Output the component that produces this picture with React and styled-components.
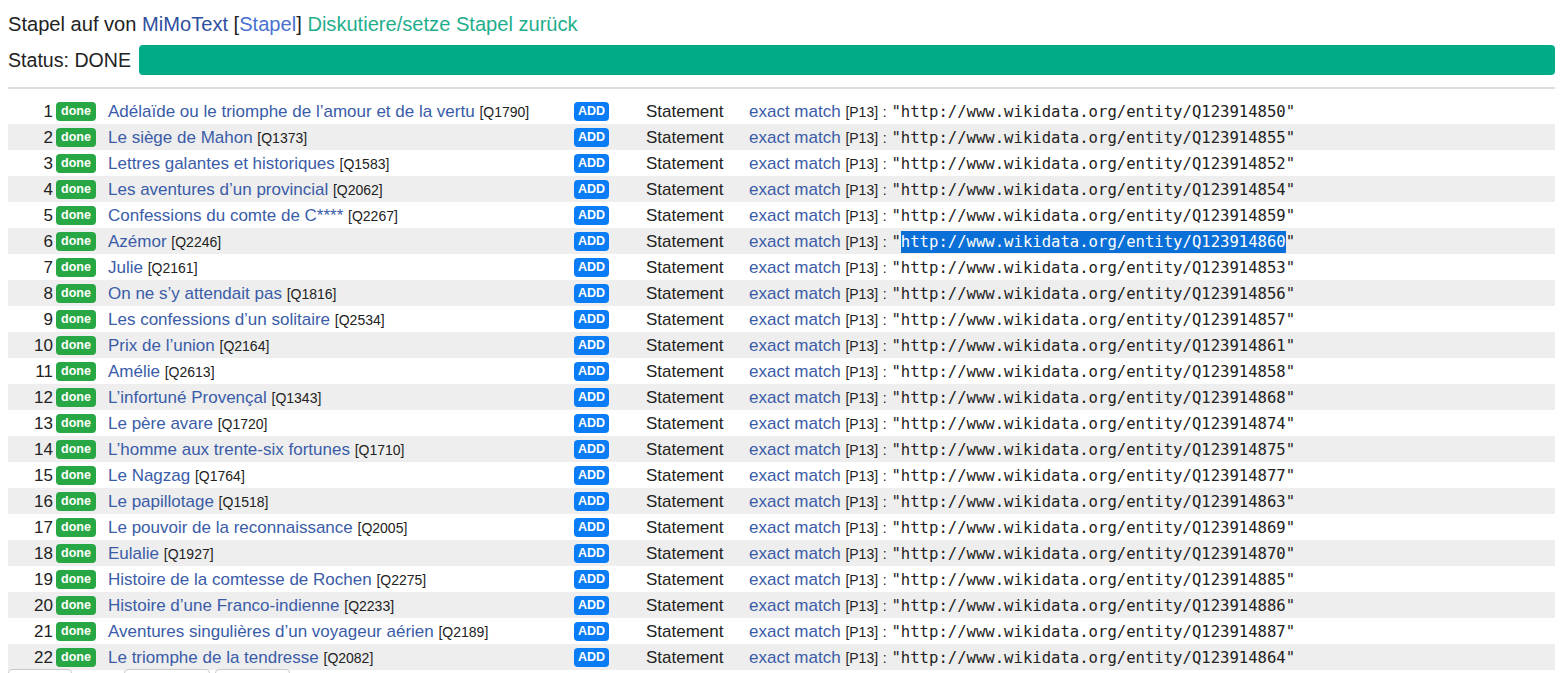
import React from 'react';
import styled, { createGlobalStyle } from 'styled-components';

const GlobalStyle = createGlobalStyle`
  body {
    margin: 0;
    background: #fff;
    font-family: "Liberation Sans", Arial, sans-serif;
    color: #222;
  }
`;

const Page = styled('div')`
  padding: 0 5px 0 8px;
`;

const Heading = styled('div')`
  margin-top: 12px;
  height: 24px;
  line-height: 24px;
  font-size: 20.1px;
  white-space: nowrap;
`;

const Link = styled('a')`
  color: ${props => props.color || '#36c'};
  text-decoration: none;
  cursor: pointer;
`;

const StatusRow = styled('div')`
  margin-top: 9px;
  height: 30px;
  display: flex;
  align-items: center;
  gap: 8px;
  font-size: 19.6px;
`;

const Progress = styled('div')`
  flex: 1;
  height: 30px;
  border-radius: 4px;
  background: #00ac88;
`;

const Rule = styled('hr')`
  margin: 12px 0 0;
  border: 0;
  border-top: 2px solid #dedede;
`;

const Table = styled('div')`
  margin-top: 9px;
`;

const Row = styled('div')`
  display: grid;
  grid-template-columns: 45px 55px 466px 72px 103px 1fr;
  align-items: center;
  height: 26px;
  padding-top: 1px;
  box-sizing: border-box;
  font-size: 17px;
  background: ${props => (props.striped ? '#eeeeee' : 'transparent')};
  white-space: nowrap;
`;

const Num = styled('span')`
  text-align: right;
  color: #222;
`;

const Badge = styled('span')`
  justify-self: start;
  display: inline-flex;
  align-items: center;
  justify-content: center;
  height: 19px;
  padding: 0 ${props => props.pad || 5}px;
  margin-left: ${props => props.offset || 0}px;
  border-radius: 4px;
  background: ${props => props.bg};
  color: #fff;
  font-size: 12.5px;
  font-weight: bold;
  line-height: 1;
`;

const Small = styled('span')`
  font-size: 14px;
  color: #222;
`;

const Mono = styled('span')`
  font-family: "DejaVu Sans Mono", "Liberation Mono", monospace;
  font-size: 15.6px;
  color: #222;
`;

const Selected = styled('span')`
  background: #0a6fd6;
  color: #fff;
  padding: 2px 0;
`;

const Buttons = styled('div')`
  display: flex;
  gap: 5px;
  margin-top: -1px;
`;

const Btn = styled('button')`
  width: ${props => props.w}px;
  margin-left: ${props => props.offset || 0}px;
  height: 30px;
  border: 1px solid #c8c8c8;
  border-radius: 4px;
  background: #fff;
`;

const rows = [
  ['Adélaïde ou le triomphe de l’amour et de la vertu', 'Q1790', '850'],
  ['Le siège de Mahon', 'Q1373', '855'],
  ['Lettres galantes et historiques', 'Q1583', '852'],
  ['Les aventures d’un provincial', 'Q2062', '854'],
  ['Confessions du comte de C****', 'Q2267', '859'],
  ['Azémor', 'Q2246', '860'],
  ['Julie', 'Q2161', '853'],
  ['On ne s’y attendait pas', 'Q1816', '856'],
  ['Les confessions d’un solitaire', 'Q2534', '857'],
  ['Prix de l’union', 'Q2164', '861'],
  ['Amélie', 'Q2613', '858'],
  ['L’infortuné Provençal', 'Q1343', '868'],
  ['Le père avare', 'Q1720', '874'],
  ['L’homme aux trente-six fortunes', 'Q1710', '875'],
  ['Le Nagzag', 'Q1764', '877'],
  ['Le papillotage', 'Q1518', '863'],
  ['Le pouvoir de la reconnaissance', 'Q2005', '869'],
  ['Eulalie', 'Q1927', '870'],
  ['Histoire de la comtesse de Rochen', 'Q2275', '885'],
  ['Histoire d’une Franco-indienne', 'Q2233', '886'],
  ['Aventures singulières d’un voyageur aérien', 'Q2189', '887'],
  ['Le triomphe de la tendresse', 'Q2082', '864'],
];

const LINK = '#3a5ca8';

export default function App() {
  return (
    <Page>
      <GlobalStyle />
      <Heading>
        Stapel auf von <Link color="#2e4f9e">MiMoText</Link> [
        <Link color="#4a70d0">Stapel</Link>]{' '}
        <Link color="#1fae8c">Diskutiere/setze Stapel zurück</Link>
      </Heading>
      <StatusRow>
        <span>Status: DONE</span>
        <Progress />
      </StatusRow>
      <Rule />
      <Table>
        {rows.map(([title, q, id], i) => {
          const url = `http://www.wikidata.org/entity/Q123914${id}`;
          return (
            <Row key={id} striped={i % 2 === 1}>
              <Num>{i + 1}</Num>
              <Badge bg="#28a745" offset={3}>
                done
              </Badge>
              <span>
                <Link color={LINK}>{title}</Link> <Small>[{q}]</Small>
              </span>
              <Badge bg="#0a7cf5" pad={4}>
                ADD
              </Badge>
              <span>Statement</span>
              <span>
                <Link color={LINK}>exact match</Link> <Small>[P13]</Small>{' '}
                <Small>:</Small>{' '}
                <Mono>
                  "{i === 5 ? <Selected>{url}</Selected> : url}"
                </Mono>
              </span>
            </Row>
          );
        })}
      </Table>
      <Buttons>
        <Btn w={64} />
        <Btn w={86} offset={47} />
        <Btn w={75} />
      </Buttons>
    </Page>
  );
}
